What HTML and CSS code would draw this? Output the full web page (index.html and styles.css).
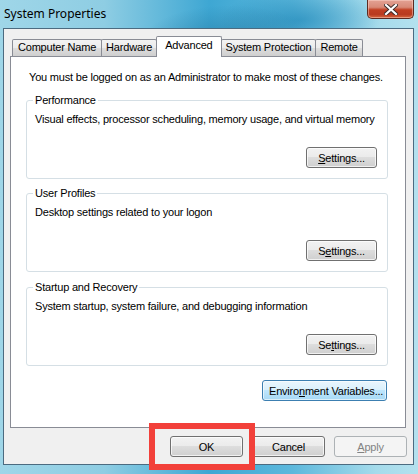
FILE: index.html
```html
<!DOCTYPE html>
<html>
<head>
<meta charset="utf-8">
<link rel="stylesheet" href="styles.css">
</head>
<body>
<div class="window">
  <div class="titlebar">
    <span class="title">System Properties</span>
    <div class="close">
      <svg width="14" height="11" viewBox="0 0 14 11">
        <path d="M2 1 L12 10 M12 1 L2 10" stroke="#3b2a28" stroke-width="4" stroke-linecap="square"/>
        <path d="M2 1 L12 10 M12 1 L2 10" stroke="#ffffff" stroke-width="2.2" stroke-linecap="square"/>
      </svg>
    </div>
  </div>
  <div class="client">
    <div class="tabs">
      <div class="tab">Computer Name</div>
      <div class="tab">Hardware</div>
      <div class="tab active">Advanced</div>
      <div class="tab">System Protection</div>
      <div class="tab">Remote</div>
    </div>
    <div class="panel">
      <p class="intro">You must be logged on as an Administrator to make most of these changes.</p>
      <fieldset class="group">
        <legend>Performance</legend>
        <p class="desc">Visual effects, processor scheduling, memory usage, and virtual memory</p>
        <div class="row"><button class="btn"><u>S</u>ettings...</button></div>
      </fieldset>
      <fieldset class="group">
        <legend>User Profiles</legend>
        <p class="desc">Desktop settings related to your logon</p>
        <div class="row"><button class="btn">S<u>e</u>ttings...</button></div>
      </fieldset>
      <fieldset class="group">
        <legend>Startup and Recovery</legend>
        <p class="desc">System startup, system failure, and debugging information</p>
        <div class="row"><button class="btn">Se<u>t</u>tings...</button></div>
      </fieldset>
      <div class="row env-row"><button class="btn env">Enviro<u>n</u>ment Variables...</button></div>
    </div>
    <div class="footer">
      <button class="btn">OK</button>
      <button class="btn">Cancel</button>
      <button class="btn disabled"><u>A</u>pply</button>
    </div>
  </div>
  <div class="highlight"></div>
</div>
</body>
</html>
```

FILE: styles.css
```css
* { box-sizing: border-box; }
html, body { margin: 0; padding: 0; }
body {
  width: 418px;
  height: 474px;
  overflow: hidden;
  font-family: "Liberation Sans", Arial, sans-serif;
  font-size: 11px;
  letter-spacing: -0.2px;
  color: #000;
}
.window {
  position: relative;
  width: 418px;
  height: 474px;
  display: flex;
  flex-direction: column;
  background:
    radial-gradient(ellipse 90px 40px at 230px 45px, rgba(30,110,150,0.55), rgba(30,110,150,0) 100%),
    radial-gradient(ellipse 80px 30px at 300px 20px, rgba(25,130,180,0.6), rgba(25,130,180,0) 100%),
    linear-gradient(90deg, #9fd6e8 0%, #8ecde3 25%, #3ea7d3 50%, #5db8dc 70%, #a5dbeb 90%, #b4e1ee 100%);
}
.titlebar {
  height: 28px;
  display: flex;
  align-items: flex-start;
}
.title {
  font-family: "Noto Sans", "Open Sans", sans-serif;
  font-size: 12px;
  letter-spacing: 0;
  line-height: 16px;
  margin: 6px 0 0 4px;
  color: #000;
}
.close {
  margin-left: auto;
  margin-right: 4px;
  width: 47px;
  height: 19px;
  border: 1px solid #5b2b22;
  border-top: none;
  border-radius: 0 0 5px 5px;
  background: linear-gradient(180deg, #e3a294 0%, #d88a78 40%, #c13f22 55%, #b83a20 80%, #d7683e 100%);
  box-shadow: inset 0 0 0 1px rgba(255,220,210,0.45);
  display: flex;
  align-items: center;
  justify-content: center;
}
.client {
  height: 437px;
  margin: 0 4px 0 3px;
  background: #f0f0f0;
  border: 1px solid #4c6b80;
  display: flex;
  flex-direction: column;
}
.tabs {
  display: flex;
  align-items: flex-end;
  height: 20px;
  margin: 7px 0 0 6px;
  padding-left: 2px;
}
.tab {
  height: 17px;
  line-height: 15px;
  padding: 0 4px;
  border: 1px solid #898c95;
  border-bottom: none;
  margin-left: -1px;
  border-radius: 2px 2px 0 0;
  background: linear-gradient(180deg, #f3f3f3 0%, #ebebeb 50%, #dddddd 51%, #cfcfcf 100%);
  white-space: nowrap;
}
.tab:first-child { margin-left: 0; padding: 0 5px; }
.tab.active {
  height: 21px;
  line-height: 17px;
  margin-bottom: -1px;
  padding: 0 8px;
  background: #ffffff;
  position: relative;
  z-index: 1;
}
.panel {
  height: 372px;
  margin: 0 7px 0 6px;
  background: #ffffff;
  border: 1px solid #898c95;
  padding: 14px 17px 0 15px;
}
p { margin: 0; }
.intro {
  line-height: 13px;
  padding-left: 3px;
  white-space: nowrap;
}
.group {
  min-width: 0;
  margin: 10px 0 0 0;
  border: 1px solid #d5dfe5;
  border-radius: 3px;
  padding: 0 10px 10px 8px;
}
.group + .group { margin-top: 8px; }
.group:last-of-type { margin-top: 9px; }
.group legend {
  padding: 0 2px;
  margin-left: -2px;
  line-height: 13px;
}
.desc {
  line-height: 13px;
  margin-top: 6px;
  white-space: nowrap;
}
.row {
  display: flex;
  justify-content: flex-end;
}
.group .row { margin-top: 21px; }
.btn {
  font-family: "Liberation Sans", Arial, sans-serif;
  font-size: 11px;
  letter-spacing: -0.2px;
  color: #000;
  height: 21px;
  min-width: 71px;
  padding: 0 6px;
  white-space: nowrap;
  border: 1px solid #707070;
  border-radius: 3px;
  background: linear-gradient(180deg, #f2f2f2 0%, #ebebeb 49%, #dddddd 50%, #cfcfcf 100%);
  box-shadow: inset 0 0 0 1px rgba(255,255,255,0.7);
  margin: 0;
}
.btn u { text-decoration: underline; }
.env-row { margin-top: 14px; padding-right: 1px; }
.btn.env {
  width: 125px;
  border-color: #3c7fb1;
  background: linear-gradient(180deg, #eaf6fd 0%, #d9f0fc 49%, #bee6fd 50%, #a7d9f5 100%);
  box-shadow: inset 0 0 0 1px rgba(255,255,255,0.6);
}
.footer {
  display: flex;
  justify-content: flex-end;
  gap: 9px;
  margin-top: 8px;
  padding-right: 6px;
}
.footer .btn { width: 73px; }
.btn.disabled {
  color: #838383;
  border-color: #adb2b5;
  background: #f4f4f4;
  box-shadow: none;
}
.highlight {
  position: absolute;
  left: 149px;
  top: 423px;
  width: 106px;
  height: 47px;
  border: 6px solid #f2403a;
}
```
